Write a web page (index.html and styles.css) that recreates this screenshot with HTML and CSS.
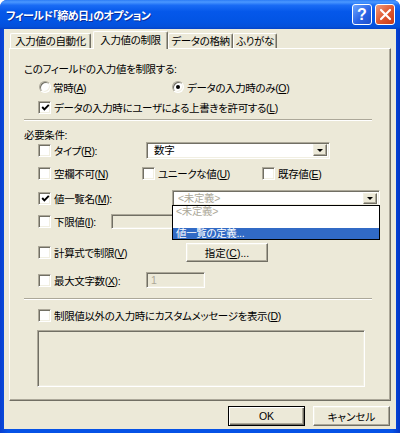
FILE: index.html
```html
<!DOCTYPE html>
<html lang="ja">
<head>
<meta charset="utf-8">
<link rel="stylesheet" href="styles.css">
</head>
<body>
<div class="window">
  <div class="titlebar">
    <span class="title">フィールド「締め日」のオプション</span>
    <span class="tb-btn help">?</span>
    <span class="tb-btn close"><svg width="13" height="13" viewBox="0 0 13 13"><path d="M2 2 L11 11 M11 2 L2 11" stroke="#fff" stroke-width="2.2" stroke-linecap="round"/></svg></span>
  </div>
  <div class="client">
    <div class="tabs">
      <div class="tab t1">入力値の自動化</div>
      <div class="tab active">入力値の制限</div>
      <div class="tab t3">データの格納</div>
      <div class="tab t4">ふりがな</div>
    </div>
    <div class="panel">
      <div class="row r1">このフィールドの入力値を制限する:</div>
      <div class="row r2">
        <label class="ctl w133"><span class="radio"></span><span>常時(<u>A</u>)</span></label>
        <label class="ctl"><span class="radio on"></span><span>データの入力時のみ(<u>O</u>)</span></label>
      </div>
      <div class="row r3 indent">
        <label class="ctl"><span class="box"><svg class="chk" width="9" height="9" viewBox="0 0 9 9"><path d="M1.2 4 L3.4 6.4 L7.8 1.8" fill="none" stroke="#000" stroke-width="1.9"/></svg></span><span>データの入力時にユーザによる上書きを許可する(<u>L</u>)</span></label>
      </div>
      <div class="sep s1"></div>
      <div class="row r4">必要条件:</div>
      <div class="row r5 indent">
        <label class="ctl w108"><span class="box"></span><span>タイプ(<u>R</u>):</span></label>
        <div class="combo c-type"><span class="combo-text">数字</span><span class="drop"><i class="arrow"></i></span></div>
      </div>
      <div class="row r6 indent">
        <label class="ctl w104"><span class="box"></span><span>空欄不可(<u>N</u>)</span></label>
        <label class="ctl w120"><span class="box"></span><span>ユニークな値(<u>U</u>)</span></label>
        <label class="ctl"><span class="box"></span><span>既存値(<u>E</u>)</span></label>
      </div>
      <div class="row r7 indent">
        <label class="ctl w134"><span class="box"><svg class="chk" width="9" height="9" viewBox="0 0 9 9"><path d="M1.2 4 L3.4 6.4 L7.8 1.8" fill="none" stroke="#000" stroke-width="1.9"/></svg></span><span>値一覧名(<u>M</u>):</span></label>
        <div class="combo c-list"><span class="combo-text gray">&lt;未定義&gt;</span><span class="drop"><i class="arrow"></i></span></div>
      </div>
      <div class="row r8 indent">
        <label class="ctl w73"><span class="box"></span><span>下限値(<u>I</u>):</span></label>
        <div class="field f-min"></div>
      </div>
      <div class="row r9 indent">
        <label class="ctl w148"><span class="box"></span><span>計算式で制限(<u>V</u>)</span></label>
        <button class="btn b-spec"><span>指定(<u>C</u>)...</span></button>
      </div>
      <div class="row r10 indent">
        <label class="ctl w108"><span class="box"></span><span>最大文字数(<u>X</u>):</span></label>
        <div class="field f-max"><span class="gray">1</span></div>
      </div>
      <div class="sep s2"></div>
      <div class="row r11 indent">
        <label class="ctl"><span class="box"></span><span>制限値以外の入力時にカスタムメッセージを表示(<u>D</u>)</span></label>
      </div>
      <div class="field memo"></div>

      <div class="dropdown">
        <div class="item gray">&lt;未定義&gt;</div>
        <div class="item"></div>
        <div class="item sel">値一覧の定義...</div>
      </div>
    </div>
    <div class="footer">
      <button class="btn default">OK</button>
      <button class="btn">キャンセル</button>
    </div>
  </div>
</div>
</body>
</html>
```

FILE: styles.css
```css
* { box-sizing: border-box; }
body {
  margin: 0;
  background: #fff;
  font-family: "Liberation Sans", "Noto Sans CJK JP", sans-serif;
  font-size: 10.5px;
  letter-spacing: -0.35px;
  font-feature-settings: "palt";
  color: #000;
}
u { text-decoration: underline; text-underline-offset: 1px; }

.window {
  width: 400px;
  height: 433px;
  background: linear-gradient(to right, #0A3FD0, #0652E6 2%, #0652E6 98%, #0436C4);
  border-radius: 7px 7px 0 0;
  display: flex;
  flex-direction: column;
  overflow: hidden;
}
.titlebar {
  height: 29px;
  flex: none;
  background: linear-gradient(to bottom, #2C7CF5 0%, #4B98FF 7%, #1A6CF5 18%, #0558EA 40%, #0254E4 75%, #0450DA 92%, #0443C8 100%);
  display: flex;
  align-items: center;
  padding: 0 5px 0 6px;
  gap: 2px;
}
.title {
  flex: 1;
  color: #fff;
  font-weight: bold;
  font-size: 11px;
  letter-spacing: -0.6px;
  text-shadow: 1px 1px 0 #0B2F9C;
  padding-top: 1px;
  white-space: nowrap;
}
.tb-btn {
  width: 20px;
  height: 21px;
  border: 1px solid #fff;
  border-radius: 3px;
  display: flex;
  align-items: center;
  justify-content: center;
}
.help {
  background: linear-gradient(135deg, #6EA6FF, #2A64E6 55%, #1C4FCC);
  color: #fff;
  font-family: "Liberation Sans", sans-serif;
  font-weight: bold;
  font-size: 16px;
  letter-spacing: 0;
  margin-right: 1px;
}
.close {
  background: linear-gradient(135deg, #F19C7E, #E05A33 50%, #C83A16);
}

.client {
  flex: 1;
  margin: 0 4px 4px 4px;
  background: #ECE9D8;
  display: flex;
  flex-direction: column;
}

.tabs {
  display: flex;
  align-items: flex-end;
  height: 17px;
  margin: 2px 0 0 6px;
  position: relative;
  z-index: 2;
}
.tab {
  height: 15px;
  border: 1px solid;
  border-color: #fff #716F64 transparent #fff;
  border-bottom: none;
  border-radius: 2px 2px 0 0;
  box-shadow: inset -1px 0 0 #ACA899;
  display: flex;
  align-items: center;
  justify-content: center;
  background: #ECE9D8;
  padding-bottom: 1px;
  white-space: nowrap;
  flex: none;
}
.t1 { width: 81px; }
.active {
  width: 75px;
  height: 18px;
  margin-left: 2px;
  margin-bottom: -1px;
  padding-bottom: 3px;
}
.t3 { width: 65px; }
.t4 { width: 44px; }

.panel {
  position: relative;
  margin-left: 5px;
  width: 382px;
  height: 353px;
  border: 1px solid;
  border-color: #fff #716F64 #716F64 #fff;
  box-shadow: inset -1px -1px 0 #ACA899;
  padding: 12px 0 0 14px;
  display: flex;
  flex-direction: column;
}
.row { display: flex; align-items: center; flex: none; white-space: nowrap; }
.indent { padding-left: 14px; }
.r1 { height: 14px; }
.r2 { height: 14px; margin-top: 5px; padding-left: 15px; }
.r3 { height: 14px; margin-top: 6px; }
.s1 { margin-top: 5px; }
.r4 { height: 14px; margin-top: 6px; }
.r5 { height: 18px; margin-top: 0; }
.r6 { height: 14px; margin-top: 7px; }
.r7 { height: 16px; margin-top: 10px; }
.r8 { height: 15px; margin-top: 8px; }
.r9 { height: 20px; margin-top: 13px; }
.r10 { height: 16px; margin-top: 10px; }
.s2 { margin-top: 10px; }
.r11 { height: 14px; margin-top: 8px; }

.sep {
  width: 348px;
  height: 2px;
  border-top: 1px solid #ACA899;
  border-bottom: 1px solid #fff;
  flex: none;
}

.ctl { display: flex; align-items: center; gap: 3px; flex: none; }
.w73 { width: 73px; }
.w104 { width: 104px; }
.w108 { width: 108px; }
.w120 { width: 120px; }
.w133 { width: 133px; gap: 2px; }
.w134 { width: 134px; }
.w148 { width: 148px; }

.box {
  width: 13px;
  height: 13px;
  flex: none;
  background: #fff;
  border: 1px solid;
  border-color: #ACA899 #fff #fff #ACA899;
  box-shadow: inset 1px 1px 0 #716F64, inset -1px -1px 0 #F1EFE2;
  display: flex;
  align-items: center;
  justify-content: center;
}
.chk { display: block; margin: 1px 0 0 1px; }
.radio {
  width: 12px;
  height: 12px;
  flex: none;
  border-radius: 50%;
  background: #fff;
  border: 1px solid;
  border-color: #ACA899 #fff #fff #ACA899;
  box-shadow: inset 1px 1px 0 #716F64, inset -1px -1px 0 #F1EFE2;
  display: flex;
  align-items: center;
  justify-content: center;
}
.radio.on::after {
  content: "";
  width: 4px;
  height: 4px;
  border-radius: 50%;
  background: #000;
}

.combo, .field {
  border: 1px solid;
  border-color: #ACA899 #fff #fff #ACA899;
  box-shadow: inset 1px 1px 0 #716F64, inset -1px -1px 0 #F1EFE2;
  display: flex;
  align-items: center;
  flex: none;
}
.combo {
  background: #fff;
  padding: 2px;
  justify-content: space-between;
}
.combo-text { padding-left: 5px; line-height: 12px; }
.c-type { width: 184px; height: 17px; }
.c-list { width: 208px; height: 16px; }
.c-list .combo-text { padding-left: 3px; }
.drop {
  width: 14px;
  height: 12px;
  background: #ECE9D8;
  border: 1px solid;
  border-color: #F1EFE2 #716F64 #716F64 #F1EFE2;
  box-shadow: inset -1px -1px 0 #ACA899;
  display: flex;
  align-items: center;
  justify-content: center;
}
.c-list .drop { height: 11px; }
.arrow {
  width: 0;
  height: 0;
  border-left: 3px solid transparent;
  border-right: 3px solid transparent;
  border-top: 3px solid #000;
  margin-top: 1px;
}
.gray { color: #ACA899; }
.field { background: #ECE9D8; padding-left: 4px; }
.f-min { width: 230px; height: 15px; }
.f-max { width: 59px; height: 16px; }
.memo { width: 328px; height: 57px; margin: 8px 0 0 13px; }

.btn {
  font: inherit;
  color: #000;
  background: #ECE9D8;
  border: 1px solid;
  border-color: #fff #716F64 #716F64 #fff;
  box-shadow: inset -1px -1px 0 #ACA899, inset 1px 1px 0 #F1EFE2;
  padding: 0;
  display: flex;
  align-items: center;
  justify-content: center;
  flex: none;
}
.b-spec { width: 82px; height: 19px; }

.dropdown {
  position: absolute;
  left: 162px;
  top: 156px;
  width: 208px;
  height: 35px;
  background: #fff;
  border: 1px solid #000;
  padding: 0;
  z-index: 3;
}
.item {
  height: 11px;
  line-height: 11px;
  padding-left: 3px;
  white-space: nowrap;
}
.item.sel {
  height: 11px;
  line-height: 11px;
  background: #316AC5;
  color: #fff;
}

.footer {
  display: flex;
  justify-content: flex-end;
  gap: 8px;
  margin-top: 5px;
  padding-right: 6px;
}
.footer .btn { width: 77px; height: 20px; }
.btn.default {
  border-color: #000;
  box-shadow: inset 1px 1px 0 #fff, inset -1px -1px 0 #716F64, inset -2px -2px 0 #ACA899;
}
```
